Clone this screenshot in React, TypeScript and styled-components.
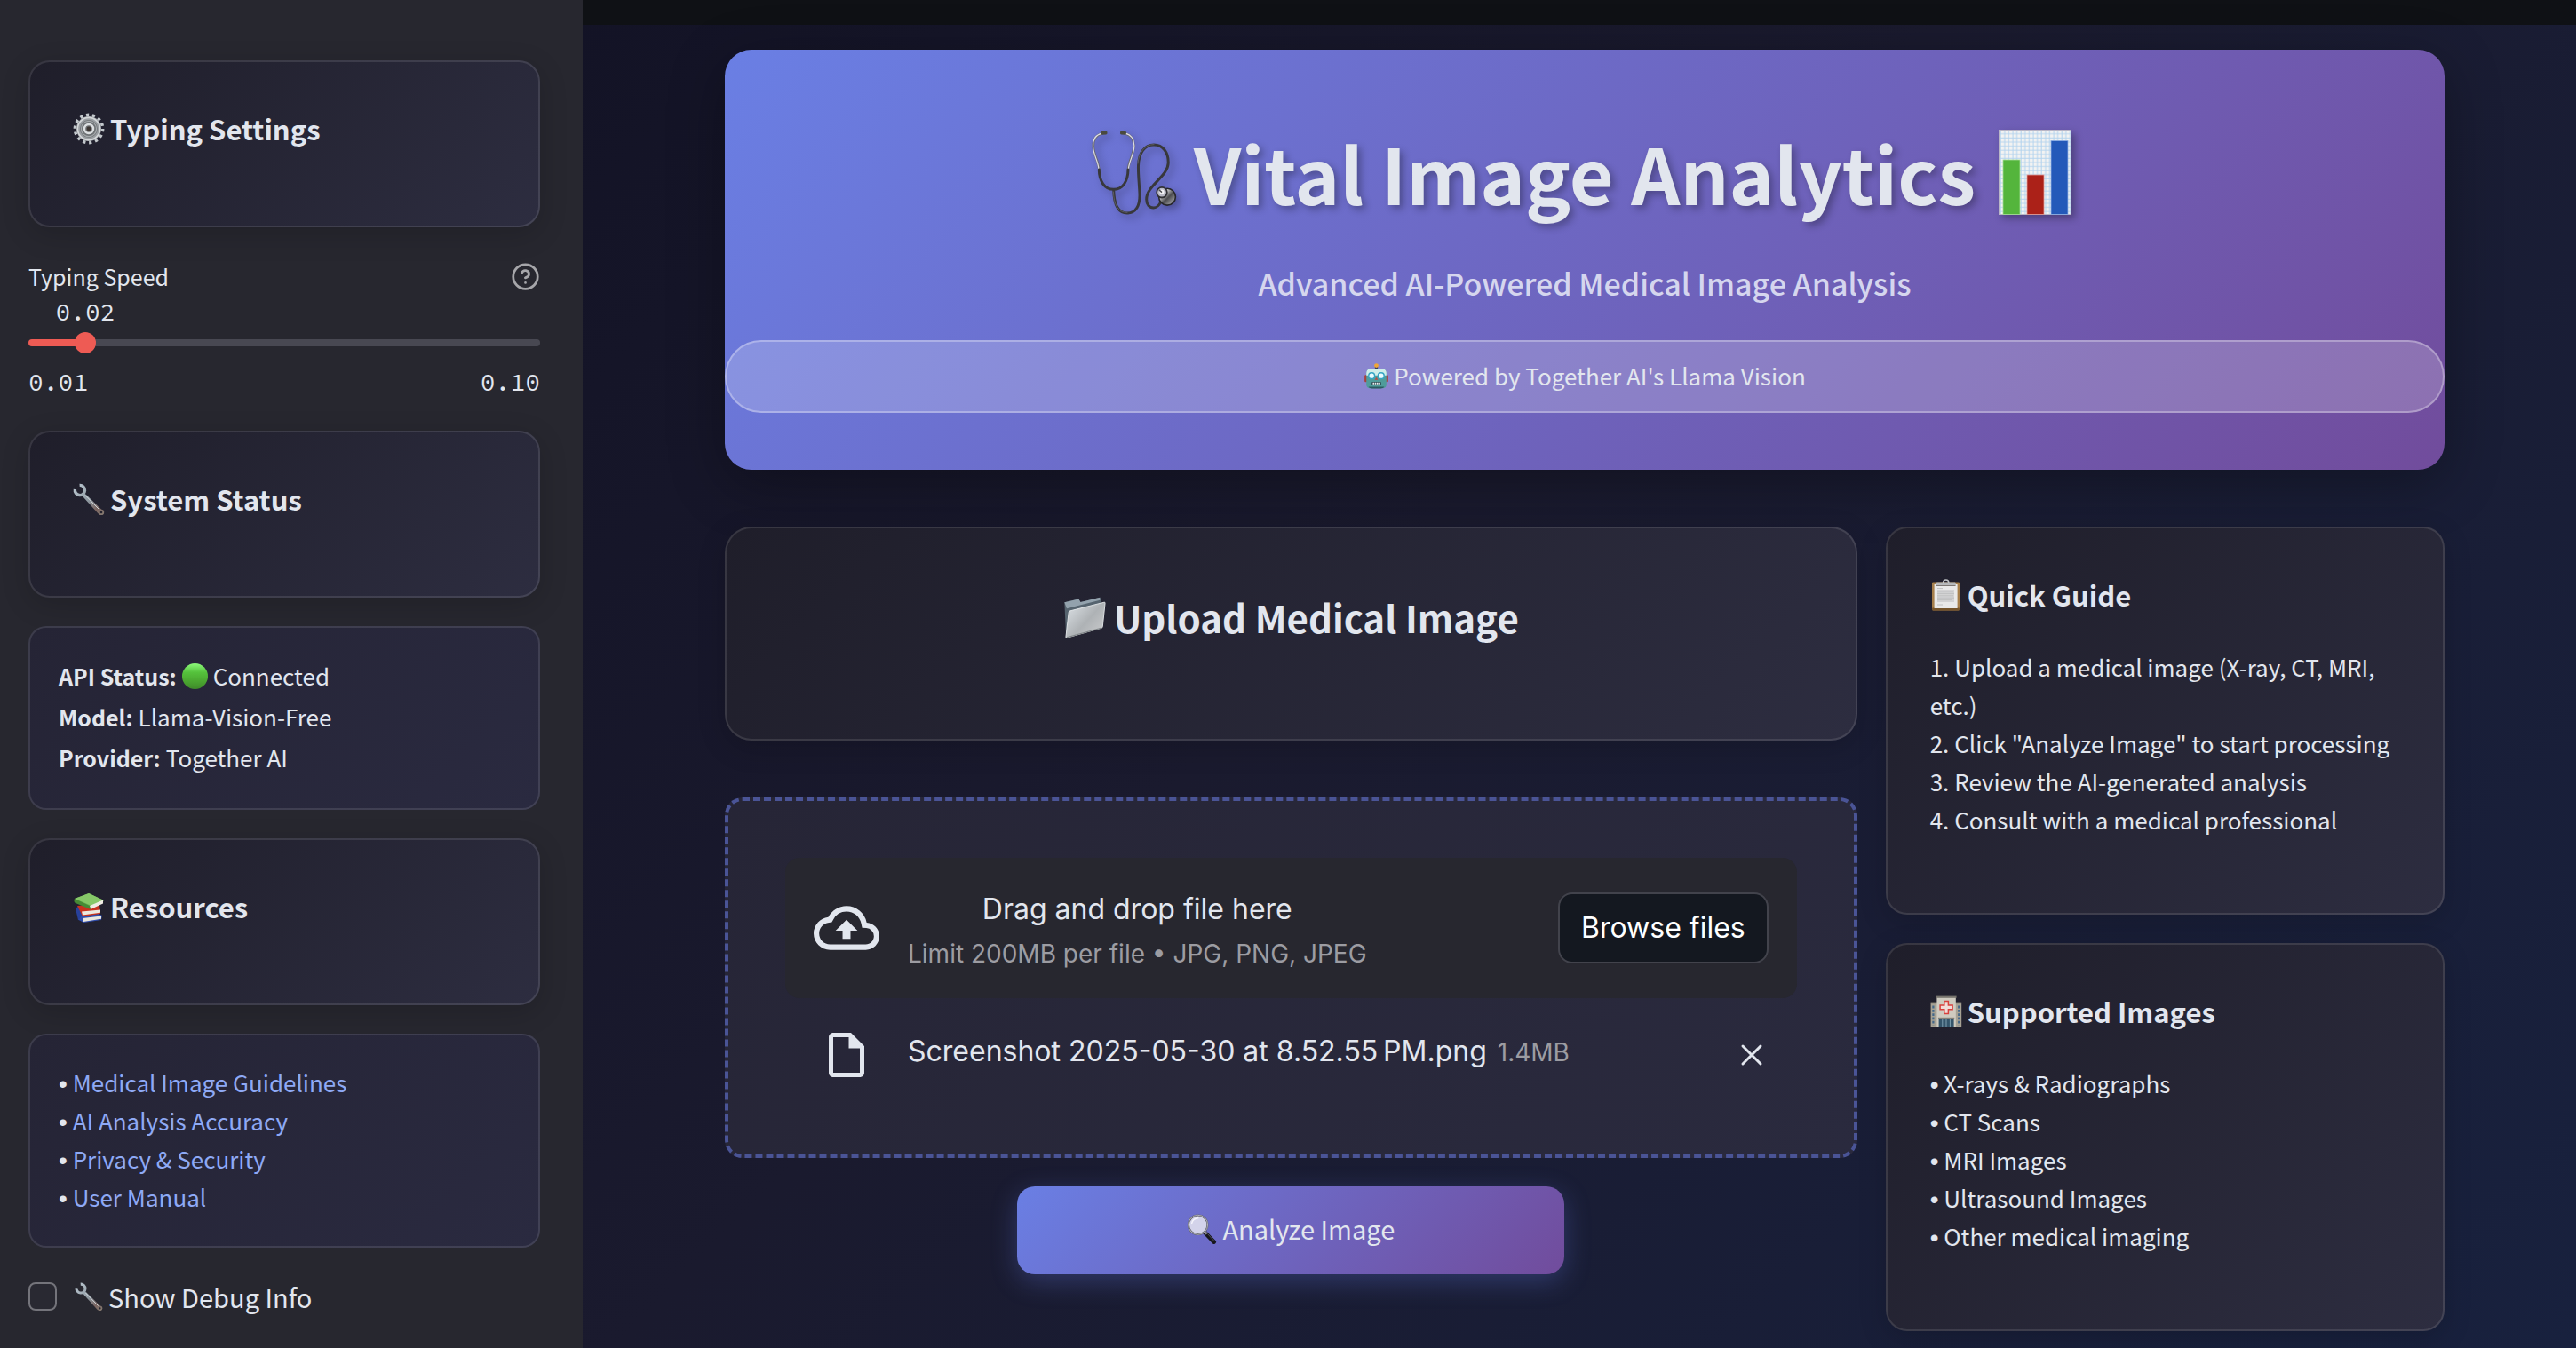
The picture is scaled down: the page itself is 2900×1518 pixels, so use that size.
import React, { useId, useState } from 'react';
import styled, { createGlobalStyle, css } from 'styled-components';

const sans = '"Noto Sans CJK SC", "Noto Sans", sans-serif';
const inter = 'Inter, "Liberation Sans", sans-serif';
const mono = '"Source Code Pro", "Liberation Mono", monospace';

const color = {
  text: '#e2e6ee',
  muted: '#9c9ca2',
  link: '#8ea9f5',
  panel: '#27272f',
  accent: '#ee5b54',
  brand: 'linear-gradient(135deg, #6a7fe4 0%, #714c9c 100%)',
  card: 'linear-gradient(135deg, #1f1e2a 0%, #2d2d40 100%)',
  inset: 'linear-gradient(135deg, #252435 0%, #2a2a40 100%)',
  line: 'rgba(255, 255, 255, 0.11)',
};

const GlobalStyle = createGlobalStyle`
  *, *::before, *::after { box-sizing: border-box; }
  body {
    margin: 0;
    background: #12121f;
    color: ${color.text};
    font-family: ${sans};
    font-size: 26px;
  }
  h1, h2, h3, p, ul, ol { margin: 0; padding: 0; }
  ul, ol { list-style: none; }
  button, input { font: inherit; color: inherit; }
`;

/* ---------- layout ---------- */

const Shell = styled.div`
  display: flex;
  min-height: 100vh;
  background: linear-gradient(135deg, #101022 0%, #1a1a2e 50%, #18213e 100%);
`;

const Sidebar = styled.aside`
  flex: 0 0 656px;
  display: flex;
  flex-direction: column;
  gap: 32px;
  padding: 68px 48px 32px 32px;
  background: ${color.panel};
`;

const Page = styled.div`
  flex: 1;
  min-width: 0;
  display: flex;
  flex-direction: column;
`;

const TopBar = styled.header`
  height: 28px;
  background: #0f1115;
`;

const Content = styled.main`
  display: flex;
  flex-direction: column;
  gap: 64px;
  padding: 28px 148px 16px 160px;
`;

const Columns = styled.div`
  display: flex;
  gap: 32px;
  align-items: flex-start;
`;

const MainColumn = styled.section`
  flex: 1 1 calc(66.6667% - 32px);
  display: flex;
  flex-direction: column;
  gap: 64px;
`;

const SideColumn = styled.section`
  flex: 1 1 calc(33.3333% - 32px);
  display: flex;
  flex-direction: column;
  gap: 32px;
`;

/* ---------- cards ---------- */

const Card = styled.section`
  padding: 48px 48px 50px;
  border: 2px solid ${color.line};
  border-radius: 24px;
  background: ${color.card};
  background-origin: border-box;
  box-shadow: 0 8px 32px rgba(0, 0, 0, 0.16);
`;

const CardTitle = styled.h3`
  display: flex;
  align-items: center;
  gap: 6px;
  margin-bottom: 32px;
  font-size: 31px;
  font-weight: 700;
  line-height: 54px;
`;

const InsetCard = styled.section`
  padding: 31px 32px 34px;
  border: 2px solid ${color.line};
  border-radius: 20px;
  background: ${color.inset};
  background-origin: border-box;
`;

const StatusLine = styled.p`
  display: flex;
  align-items: center;
  gap: 6px;
  line-height: 46px;

  strong {
    font-size: 25px;
  }
`;

const lines = css`
  line-height: 43px;
`;

const LinkList = styled.ul`
  ${lines}
`;

const GuideList = styled.ul`
  ${lines}
  margin-bottom: 34px;
`;

/* The CJK face draws its bullet full-width, so the dot takes a Latin face. */
const Bullet = styled.span`
  font-family: "Liberation Sans", Arial, sans-serif;
  font-size: 28px;
  line-height: 1;
`;

const Link = styled.a`
  color: ${color.link};
  text-decoration: none;
`;

/* ---------- slider ---------- */

const SliderField = styled.div`
  display: flex;
  flex-direction: column;
`;

const SliderHeader = styled.div`
  display: flex;
  align-items: center;
  justify-content: space-between;
  font-size: 25px;
  line-height: 46px;
`;

const HelpButton = styled.button`
  display: flex;
  padding: 0;
  border: 0;
  background: none;
  color: #a6a6aa;
`;

const SliderValue = styled.output`
  width: max-content;
  transform: translateX(-50%);
  font-family: ${mono};
  font-size: 28px;
  line-height: 34px;
`;

const Track = styled.div`
  display: flex;
  align-items: center;
  height: 8px;
  margin-top: 14px;
  border-radius: 4px;
`;

const Range = styled.input`
  flex: none;
  width: calc(100% + 24px);
  height: 24px;
  margin: 0 -12px;
  appearance: none;
  background: transparent;

  &::-webkit-slider-runnable-track {
    height: 24px;
    background: transparent;
  }
  &::-webkit-slider-thumb {
    appearance: none;
    width: 24px;
    height: 24px;
    border-radius: 50%;
    background: ${color.accent};
  }
`;

const Ticks = styled.div`
  display: flex;
  justify-content: space-between;
  margin: 22px 0 5px;
  font-family: ${mono};
  font-size: 28px;
  line-height: 36px;
`;

/* ---------- checkbox ---------- */

const CheckRow = styled.label`
  display: flex;
  align-items: center;
  gap: 6px;
  font-size: 29px;
  line-height: 46px;
`;

const CheckBox = styled.input`
  width: 32px;
  height: 32px;
  margin: 0 14px 0 0;
  appearance: none;
  border: 2px solid #74747b;
  border-radius: 8px;
  background: #292932;

  &:checked {
    background: ${color.accent};
  }
`;

/* ---------- hero ---------- */

const Hero = styled.section`
  display: flex;
  flex-direction: column;
  padding: 66px 0 64px;
  border-radius: 30px;
  background: ${color.brand};
  box-shadow: 0 16px 64px rgba(0, 0, 0, 0.3);
  text-align: center;
`;

const HeroTitle = styled.h1`
  display: flex;
  align-items: center;
  justify-content: center;
  gap: 17px;
  margin-bottom: 26px;
  font-size: 86px;
  font-weight: 700;
  line-height: 144px;
  text-shadow: 4px 4px 8px rgba(0, 0, 0, 0.3);

  svg {
    overflow: visible;
    filter: drop-shadow(4px 4px 4px rgba(0, 0, 0, 0.3));
  }
`;

const HeroSubtitle = styled.p`
  margin-bottom: 37px;
  color: #d5d6ee;
  font-size: 34px;
  font-weight: 500;
  line-height: 54px;
`;

const Pill = styled.p`
  display: flex;
  align-items: center;
  justify-content: center;
  gap: 5px;
  padding: 15px 32px 17px;
  border: 2px solid rgba(255, 255, 255, 0.3);
  border-radius: 50px;
  background: rgba(255, 255, 255, 0.2);
  line-height: 46px;
`;

/* ---------- upload ---------- */

const UploadHeader = styled(Card)`
  padding: 64px;
  border-radius: 30px;
`;

const UploadTitle = styled.h2`
  display: flex;
  align-items: center;
  justify-content: center;
  gap: 9px;
  margin-bottom: 37px;
  font-size: 42px;
  font-weight: 700;
  line-height: 72px;
`;

const UploadActions = styled.div`
  display: flex;
  flex-direction: column;
  align-items: center;
  gap: 32px;
`;

const Uploader = styled.div`
  align-self: stretch;
  padding: 64px;
  border: 4px dashed #4a5496;
  border-radius: 20px;
  background: linear-gradient(135deg, #262536 0%, #2a2a3e 100%);
  background-origin: border-box;
  font-family: ${inter};
  font-size: 32px;
`;

const uploadRow = css`
  display: flex;
  align-items: center;
  gap: 32px;
  padding: 0 32px;
`;

const Dropzone = styled.div`
  ${uploadRow}
  min-height: 158px;
  border-radius: 16px;
  background: ${color.panel};
`;

const DropText = styled.div`
  padding-top: 8px;
  line-height: 50px;
  text-align: center;
`;

const DropHint = styled.p`
  color: ${color.muted};
  font-size: 28px;
`;

const BrowseButton = styled.button`
  margin-left: auto;
  padding: 0 24px;
  border: 2px solid #42434c;
  border-radius: 16px;
  background: #141820;
  color: #fff;
  line-height: 76px;
`;

const FileRow = styled.div`
  ${uploadRow}
  height: 96px;
  margin-top: 16px;
`;

const IconCell = styled.span`
  flex: 0 0 74px;
  display: flex;
  justify-content: center;
`;

const FileName = styled.p`
  display: flex;
  align-items: baseline;
  gap: 12px;
  padding-bottom: 8px;
  line-height: 40px;
`;

const FileSize = styled.small`
  color: ${color.muted};
  font-size: 28px;
`;

const RemoveButton = styled.button`
  display: flex;
  margin-left: auto;
  padding: 0;
  border: 0;
  background: none;
`;

const AnalyzeButton = styled.button`
  display: flex;
  align-items: center;
  justify-content: center;
  gap: 6px;
  width: 616px;
  padding: 0 32px 4px;
  border: 0;
  border-radius: 20px;
  background: ${color.brand};
  box-shadow: 0 8px 30px rgba(102, 126, 234, 0.3);
  font-size: 29px;
  line-height: 95px;
`;

/* ---------- drawings ---------- */

type GlyphProps = { size: number };

const Glyph = ({ size, box = 36, children }: GlyphProps & { box?: number; children: React.ReactNode }) => (
  <svg width={size} height={size} viewBox={`0 0 ${box} ${box}`} fill="none" aria-hidden="true">
    {children}
  </svg>
);

const Gear = ({ size }: GlyphProps) => (
  <Glyph size={size}>
    <circle cx="18" cy="18" r="15.6" stroke="#c3c8cc" strokeWidth="3.6" strokeDasharray="3.2 3.8" />
    <circle cx="18" cy="18" r="14" fill="#9a9ea2" />
    <circle cx="18" cy="18" r="12.6" stroke="#d3d6d8" strokeWidth="1.6" />
    <circle cx="18" cy="18" r="10" fill="#6f7376" />
    <circle cx="18" cy="18" r="8.6" stroke="#a5a9ac" strokeWidth="1.2" />
    <circle cx="18" cy="18" r="5" fill="#6a6c6e" stroke="#dcdfe1" strokeWidth="2.4" />
    <circle cx="18" cy="18" r="2.4" fill="#3d3633" />
  </Glyph>
);

const Wrench = ({ size }: GlyphProps) => {
  const id = useId();
  return (
    <Glyph size={size}>
      <defs>
        <linearGradient id={id} x1="4" y1="4" x2="34" y2="34" gradientUnits="userSpaceOnUse">
          <stop offset="0" stopColor="#b6c3cd" />
          <stop offset="0.5" stopColor="#8d979f" />
          <stop offset="0.8" stopColor="#7a6460" />
          <stop offset="1" stopColor="#84786f" />
        </linearGradient>
      </defs>
      <path d="M7.6 2.4A5.6 5.6 0 1 1 2.4 7" stroke={`url(#${id})`} strokeWidth="3.4" />
      <path d="M11.5 10.5 15 13 32.6 30a3 3 0 0 1-4.2 4.2L12 16l-2.4-3.4Z" fill={`url(#${id})`} />
      <circle cx="32" cy="33" r="3.2" fill={`url(#${id})`} />
      <path d="M14 13.6 30 30" stroke="#d5dce1" strokeWidth="1" />
      <circle cx="32" cy="33" r="1.3" fill="#25242f" />
    </Glyph>
  );
};

const Books = ({ size }: GlyphProps) => (
  <Glyph size={size}>
    <path d="M3 20 7 17l6 9-2 8-5-1Z" fill="#27409a" />
    <path d="M9 29 29 26l4 2-1 5-20 3-5-3Z" fill="#2f4cab" />
    <path d="M11 31 32 28.4v3.4L12 35Z" fill="#e9e6df" />
    <path d="M5 17 30 15l1 11-20 3Z" fill="#c8321f" />
    <path d="M10 23.6 31 21.6v3.2L11 27.6Z" fill="#ece8e0" />
    <path d="M2 9 18 3l17 8-14 9L3 13Z" fill="#67ad50" />
    <path d="M2 9 18 3l17 8-14 6Z" fill="#86c868" />
    <path d="M19 17 34 10.6v4L20 21Z" fill="#efece3" />
    <path d="M2 9c-1 2-.6 4 1 5l17 7-1-4Z" fill="#478a35" />
  </Glyph>
);

const GreenDot = ({ size }: GlyphProps) => {
  const id = useId();
  return (
    <Glyph size={size}>
      <defs>
        <linearGradient id={id} x1="0" y1="0" x2="0" y2="1">
          <stop offset="0" stopColor="#8efb7c" />
          <stop offset="0.35" stopColor="#55c23c" />
          <stop offset="0.7" stopColor="#4aa630" />
          <stop offset="1" stopColor="#3f8a2a" />
        </linearGradient>
      </defs>
      <circle cx="18" cy="18" r="18" fill={`url(#${id})`} />
    </Glyph>
  );
};

const Folder = ({ size }: GlyphProps) => {
  const id = useId();
  return (
    <Glyph size={size}>
      <defs>
        <linearGradient id={id} x1="6" y1="10" x2="30" y2="32" gradientUnits="userSpaceOnUse">
          <stop offset="0" stopColor="#d3d8dc" />
          <stop offset="0.55" stopColor="#aeb2b5" />
          <stop offset="1" stopColor="#c4c6c8" />
        </linearGradient>
      </defs>
      <path d="M1 5.4 13 2.6l1.6 2.6L31 1.4l1 3.2V26L2.4 35Z" fill="#56646f" />
      <path d="M1 5.4 13 2.6l1.6 2.6L31 1.4v2.2L3 10.6Z" fill="#93a2ad" />
      <path d="M6 12.6 34.6 5.4c.6-.1.8.2.7.8L33.2 26c0 .6-.4 1-1 1.2L3 35.4c-.6.1-.9-.2-.8-.8L4.6 14c.1-.8.6-1.2 1.4-1.4Z" fill={`url(#${id})`} stroke="#e3e6e8" strokeWidth="0.7" />
      <path d="M3 35.2 32.6 27" stroke="#7c8184" strokeWidth="0.9" />
    </Glyph>
  );
};

const Clipboard = ({ size }: GlyphProps) => (
  <Glyph size={size}>
    <rect x="2" y="3.4" width="31" height="32" rx="1.4" fill="#a67f4b" />
    <rect x="2" y="32.6" width="31" height="3" rx="1" fill="#76552c" />
    <rect x="4.6" y="6" width="26" height="27" fill="#e9e9e9" />
    <rect x="8" y="12" width="19" height="14" fill="#d3d3d4" />
    <path d="M8 10.6h6M8 14h18M8 16.4h19M8 18.8h18M8 21.2h19M8 23.6h17M8 29h6" stroke="#bfc0c1" strokeWidth="1" />
    <path d="M6.6 6.8V5c0-.8.6-1.4 1.4-1.4h19.4c.8 0 1.4.6 1.4 1.4v1.8Z" fill="#b4b7ba" />
    <path d="M6.6 7.4h22" stroke="#6f6a66" strokeWidth="1" />
    <path d="M14.6 4c0-1.800 1.200-3 3.100-3s3.100 1.200 3.100 3" stroke="#c3c6c9" strokeWidth="1.6" />
  </Glyph>
);

const Hospital = ({ size }: GlyphProps) => (
  <Glyph size={size}>
    <rect x="0.6" y="8" width="34.6" height="27.6" fill="#a7a294" />
    <rect x="0.6" y="7.4" width="34.6" height="1.8" fill="#6d6a64" />
    <rect x="7.4" y="1" width="21.4" height="34.6" fill="#cfcbc0" />
    <rect x="6.6" y="0.6" width="23" height="2.2" fill="#77746d" />
    <path d="M3.4 11.6v21.6M32.2 11.6v21.6" stroke="#44688a" strokeWidth="2.2" strokeDasharray="2.8 1.5" />
    <path d="M15.8 6.4h4.6v4.7h4.7v4.6h-4.7v4.7h-4.6v-4.7h-4.7v-4.6h4.7Z" fill="#f1dcd8" stroke="#d8403c" strokeWidth="1.5" />
    <rect x="9.6" y="25.6" width="17" height="10" fill="#34556b" />
    <path d="M13.8 27v8.6M18 27v8.6M22.4 27v8.6" stroke="#7e9fb0" strokeWidth="1" />
    <rect x="9" y="24.8" width="18.2" height="1.6" fill="#858178" />
  </Glyph>
);

const Robot = ({ size }: GlyphProps) => (
  <Glyph size={size}>
    <path d="M18 5v5" stroke="#3b3f52" strokeWidth="4" />
    <circle cx="18" cy="3.2" r="3" fill="#f0a637" />
    <rect x="1.4" y="16.4" width="4" height="10" rx="1.6" fill="#a8423c" />
    <rect x="30.6" y="16.4" width="4" height="10" rx="1.6" fill="#a8423c" />
    <path d="M4 14c0-4 3-6.400 7-6.400h14c4 0 7 2.400 7 6.400v16c0 3.200-2.200 5-5.400 5H9.400C6.200 35 4 33.200 4 30Z" fill="#4f9c9b" />
    <path d="M4 14c0-4 3-6.400 7-6.400h14c4 0 7 2.400 7 6.400v3H4Z" fill="#cfeeea" />
    <path d="M7 33c1 2 3 2.400 5 2.400h12c2 0 4-.4 5-2.400Z" fill="#2a5a60" />
    <circle cx="11.4" cy="17.600" r="4.200" fill="#eafcff" stroke="#36a5c4" strokeWidth="1.800" />
    <circle cx="24.6" cy="17.600" r="4.200" fill="#eafcff" stroke="#36a5c4" strokeWidth="1.800" />
    <path d="m18 19.400 2.200 4h-4.400Z" fill="#c2473c" />
    <rect x="11.4" y="26" width="13.2" height="4.6" rx="1.2" fill="#2c4a52" />
    <path d="M13 28.3h10.4" stroke="#e8eeee" strokeWidth="2.4" strokeDasharray="2 0.8" />
  </Glyph>
);

const Magnifier = ({ size }: GlyphProps) => (
  <Glyph size={size}>
    <path d="m21.5 22 11 11.4" stroke="#17171b" strokeWidth="5" strokeLinecap="round" />
    <path d="m21 20.6 3 3.4" stroke="#8b8b94" strokeWidth="3" />
    <path d="m25 24 8 8.6" stroke="#55555d" strokeWidth="1" />
    <circle cx="13.4" cy="13" r="11.4" fill="#d3d3ea" stroke="#63646d" strokeWidth="2.2" />
    <circle cx="13.4" cy="13" r="11.6" stroke="#c8c9d2" strokeWidth="0.8" />
    <path d="M6 11a8 8 0 0 1 7.4-6" stroke="#f4f4fb" strokeWidth="1.6" strokeLinecap="round" />
  </Glyph>
);

const Stethoscope = ({ size }: GlyphProps) => {
  const id = useId();
  return (
    <Glyph size={size} box={100}>
      <defs>
        <linearGradient id={id} x1="0" y1="0" x2="1" y2="1">
          <stop offset="0" stopColor="#5d5d60" />
          <stop offset="0.3" stopColor="#c9c9cb" />
          <stop offset="0.55" stopColor="#4b4b4e" />
          <stop offset="0.8" stopColor="#8f8f92" />
          <stop offset="1" stopColor="#2c2c2e" />
        </linearGradient>
      </defs>
      <g strokeLinecap="round" strokeLinejoin="round">
        <path d="M13.5 6.5C7 8 3.5 13 3.8 21c.3 9 5.6 16 6.5 25.500M39.8 6.5c6.500 1.500 10 6.500 9.700 14.500-.3 9-5.600 16-6.500 25.500" stroke="#67676f" strokeWidth="2.6" />
        <path d="M13.5 6.2C7 7.7 3.2 13 3.5 21c.3 9 5.6 16 6.5 25.500M39.8 6.2c6.500 1.500 10.300 6.800 10 14.800-.3 9-5.600 16-6.500 25.500" stroke="#dcdce4" strokeWidth="1.2" />
        <path d="M10.3 47c.2 13 6 22.300 16.400 22.300S42.8 60 43 47" stroke="#38383b" strokeWidth="3" />
        <path d="M26.7 69.5C27 85 30.5 96 42 96c10 0 14.500-8.500 14-22-.5-12-1.800-21-1.500-31.500C54.9 28 61.5 19 72 19c10 0 16.500 8.500 16.200 20.500C87.9 55 63.7 65 63.7 80.5c0 6 3.200 9.400 8 9.400 4.300 0 6.300-2.600 8-6.400" stroke="#38383b" strokeWidth="3" />
        <path d="M26.4 72C27 86 31 95.4 42 95.4M54 40C54.9 28 61.5 18.6 72 18.6" stroke="#66666a" strokeWidth="0.8" />
      </g>
      <rect x="12.5" y="3.6" width="7" height="4" rx="1.6" fill="#4a4a3e" transform="rotate(-6 16 5.6)" />
      <rect x="34" y="3.6" width="7" height="4" rx="1.6" fill="#4a4a3e" transform="rotate(6 37.5 5.6)" />
      <circle cx="87" cy="77.7" r="9.4" fill={`url(#${id})`} stroke="#27272a" strokeWidth="1.6" />
      <circle cx="81" cy="72.7" r="5.8" fill="#b9b9c4" stroke="#303034" strokeWidth="1.8" />
      <circle cx="81" cy="72" r="2.6" fill="#f2f2f5" />
      <path d="m81 72.6-3.200-2.800" stroke="#4a4a50" strokeWidth="1.4" />
    </Glyph>
  );
};

const BarChart = ({ size }: GlyphProps) => {
  const id = useId();
  return (
    <Glyph size={size} box={100}>
      <defs>
        <pattern id={id} width="4.6" height="4.6" patternUnits="userSpaceOnUse">
          <path d="M0 2h4.600M2 0v4.600" stroke="#b3d3ee" strokeWidth="1" />
        </pattern>
      </defs>
      <rect x="9" y="2" width="82" height="96" fill="#f3f3f2" />
      <rect x="9" y="2" width="82" height="96" fill={`url(#${id})`} />
      <rect x="9.5" y="2.5" width="81" height="95" stroke="#b9b6c6" />
      <rect x="14" y="36" width="19" height="61.5" fill="#54b53c" stroke="#a4dc96" strokeWidth="0.8" />
      <rect x="41" y="53" width="19" height="44.5" fill="#ab2118" stroke="#df9b96" strokeWidth="0.8" />
      <rect x="68" y="14.5" width="19" height="83" fill="#2459b9" stroke="#8fb0e4" strokeWidth="0.8" />
    </Glyph>
  );
};

const HelpIcon = () => (
  <svg width="33" height="33" viewBox="0 0 24 24" fill="none" stroke="currentColor" strokeWidth="2" strokeLinecap="round" aria-hidden="true">
    <circle cx="12" cy="12" r="10" />
    <path d="M9.09 9a3 3 0 0 1 5.83 1c0 2-3 3-3 3M12 17h.01" />
  </svg>
);

const CloudIcon = () => (
  <svg width="74" height="74" viewBox="0 0 24 24" fill="currentColor" aria-hidden="true">
    <path d="M19.35 10.04A7.49 7.49 0 0 0 12 4C9.11 4 6.6 5.64 5.35 8.04A5.994 5.994 0 0 0 0 14c0 3.31 2.69 6 6 6h13c2.76 0 5-2.24 5-5 0-2.64-2.05-4.78-4.65-4.96zM19 18H6c-2.21 0-4-1.79-4-4 0-2.05 1.53-3.76 3.56-3.97l1.07-.11.5-.95A5.469 5.469 0 0 1 12 6c2.62 0 4.88 1.86 5.39 4.43l.3 1.5 1.53.11A2.98 2.98 0 0 1 22 15c0 1.65-1.35 3-3 3zM8 13h2.55v3h2.9v-3H16l-4-4z" />
  </svg>
);

const FileIcon = () => (
  <svg width="60" height="60" viewBox="0 0 24 24" fill="currentColor" aria-hidden="true">
    <path d="M6 2c-1.1 0-1.99.9-1.99 2L4 20c0 1.1.89 2 1.99 2H18c1.1 0 2-.9 2-2V8l-6-6H6zm0 18V4h7v5h5v11H6z" />
  </svg>
);

const CloseIcon = () => (
  <svg width="38" height="38" viewBox="0 0 38 38" fill="none" stroke="currentColor" strokeWidth="3" strokeLinecap="round" aria-hidden="true">
    <path d="m9 9 20 20M29 9 9 29" />
  </svg>
);

/* ---------- sections ---------- */

const MIN = 0.01;
const MAX = 0.1;

function TypingSpeed() {
  const [speed, setSpeed] = useState(0.02);
  const share = ((speed - MIN) / (MAX - MIN)) * 100;
  return (
    <SliderField>
      <SliderHeader>
        <label htmlFor="speed">Typing Speed</label>
        <HelpButton type="button" aria-label="Help for Typing Speed">
          <HelpIcon />
        </HelpButton>
      </SliderHeader>
      <SliderValue htmlFor="speed" style={{ marginLeft: `${share}%` }}>
        {speed.toFixed(2)}
      </SliderValue>
      <Track style={{ background: `linear-gradient(to right, ${color.accent} ${share}%, #484852 ${share}%)` }}>
        <Range
          id="speed"
          type="range"
          min={MIN}
          max={MAX}
          step={0.01}
          value={speed}
          onChange={(e) => setSpeed(Number(e.target.value))}
        />
      </Track>
      <Ticks>
        <span>{MIN.toFixed(2)}</span>
        <span>{MAX.toFixed(2)}</span>
      </Ticks>
    </SliderField>
  );
}

const resources = ['Medical Image Guidelines', 'AI Analysis Accuracy', 'Privacy & Security', 'User Manual'];

const steps = [
  '1. Upload a medical image (X-ray, CT, MRI, etc.)',
  '2. Click "Analyze Image" to start processing',
  '3. Review the AI-generated analysis',
  '4. Consult with a medical professional',
];

const imageKinds = ['X-rays & Radiographs', 'CT Scans', 'MRI Images', 'Ultrasound Images', 'Other medical imaging'];

export default function App() {
  return (
    <>
      <GlobalStyle />
      <Shell>
        <Sidebar>
          <Card>
            <CardTitle><Gear size={36} />Typing Settings</CardTitle>
          </Card>
          <TypingSpeed />
          <Card>
            <CardTitle><Wrench size={36} />System Status</CardTitle>
          </Card>
          <InsetCard>
            <StatusLine><strong>API Status:</strong><GreenDot size={29} />Connected</StatusLine>
            <StatusLine><strong>Model:</strong>Llama-Vision-Free</StatusLine>
            <StatusLine><strong>Provider:</strong>Together AI</StatusLine>
          </InsetCard>
          <Card>
            <CardTitle><Books size={36} />Resources</CardTitle>
          </Card>
          <InsetCard>
            <LinkList>
              {resources.map((name) => (
                <li key={name}><Bullet>•</Bullet> <Link href="#">{name}</Link></li>
              ))}
            </LinkList>
          </InsetCard>
          <CheckRow>
            <CheckBox type="checkbox" />
            <Wrench size={32} />
            Show Debug Info
          </CheckRow>
        </Sidebar>

        <Page>
          <TopBar />
          <Content>
            <Hero>
              <HeroTitle><Stethoscope size={100} />Vital Image Analytics<BarChart size={100} /></HeroTitle>
              <HeroSubtitle>Advanced AI-Powered Medical Image Analysis</HeroSubtitle>
              <Pill><Robot size={29} />Powered by Together AI's Llama Vision</Pill>
            </Hero>

            <Columns>
              <MainColumn>
                <UploadHeader>
                  <UploadTitle><Folder size={48} />Upload Medical Image</UploadTitle>
                </UploadHeader>
                <UploadActions>
                  <Uploader>
                    <Dropzone>
                      <IconCell><CloudIcon /></IconCell>
                      <DropText>
                        <p>Drag and drop file here</p>
                        <DropHint>Limit 200MB per file • JPG, PNG, JPEG</DropHint>
                      </DropText>
                      <BrowseButton type="button">Browse files</BrowseButton>
                    </Dropzone>
                    <FileRow>
                      <IconCell><FileIcon /></IconCell>
                      <FileName>
                        {'Screenshot 2025-05-30 at 8.52.55\u202fPM.png'}
                        <FileSize>1.4MB</FileSize>
                      </FileName>
                      <RemoveButton type="button" aria-label="Remove file"><CloseIcon /></RemoveButton>
                    </FileRow>
                  </Uploader>
                  <AnalyzeButton type="button"><Magnifier size={34} />Analyze Image</AnalyzeButton>
                </UploadActions>
              </MainColumn>

              <SideColumn>
                <Card>
                  <CardTitle><Clipboard size={36} />Quick Guide</CardTitle>
                  <GuideList as="ol">
                    {steps.map((step) => <li key={step}>{step}</li>)}
                  </GuideList>
                </Card>
                <Card>
                  <CardTitle><Hospital size={36} />Supported Images</CardTitle>
                  <GuideList>
                    {imageKinds.map((kind) => <li key={kind}><Bullet>•</Bullet> {kind}</li>)}
                  </GuideList>
                </Card>
              </SideColumn>
            </Columns>
          </Content>
        </Page>
      </Shell>
    </>
  );
}
